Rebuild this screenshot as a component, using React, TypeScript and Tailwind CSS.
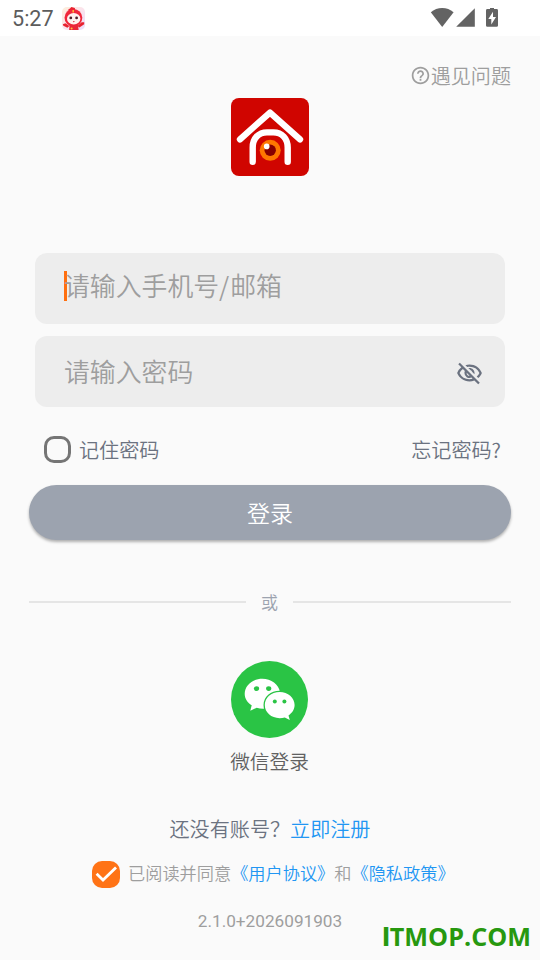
import type { ReactNode } from "react"
import { MdHelpOutline, MdOutlineVisibilityOff } from "react-icons/md"

function MascotIcon() {
  return (
    <svg viewBox="0 0 23 23" className="h-[23px] w-[23px]" aria-hidden>
      <defs>
        <linearGradient id="mascot-bg" x1="0" y1="0" x2="1" y2="1">
          <stop offset="0%" stopColor="#fdeeda" />
          <stop offset="50%" stopColor="#fbe3ec" />
          <stop offset="100%" stopColor="#eadcfb" />
        </linearGradient>
      </defs>
      <rect width="23" height="23" rx="5" fill="url(#mascot-bg)" />
      <path d="M5.5 3.2 8.2 1.2 9.4 0 12.8 1 13.4 3.4 9 4.4Z" fill="#e8222f" />
      <circle cx="11.4" cy="10.8" r="8.9" fill="#f0263a" />
      <path d="M0.8 17.2 3.4 16.2 7.4 19 5.4 20.8 1.4 18.8Z" fill="#e8222f" />
      <path d="M22.2 15.2 19.6 15.2 15.4 19 17.4 20.4 22.2 17.2Z" fill="#e8222f" />
      <path d="M7.6 17.5h8.4l0.6 5.5H7.2Z" fill="#ea2638" />
      <ellipse cx="11.7" cy="11.8" rx="6.7" ry="5.7" fill="#fff3f0" />
      <circle cx="8.8" cy="10.9" r="1.4" fill="#4b2028" />
      <circle cx="14.6" cy="10.9" r="1.4" fill="#4b2028" />
      <path d="M10.8 14h2l-1 1.4Z" fill="#e23a4a" />
      <path d="M10.4 3h1.6v2.6h-1.6Z" fill="#ffb238" />
      <circle cx="9.6" cy="21.4" r="1" fill="#ffc23c" />
    </svg>
  )
}

function StatusBar() {
  return (
    <div className="flex h-9 items-center justify-between bg-white pr-[42px] pl-3">
      <div className="flex items-center gap-2">
        <span className="w-[42px] pt-0.5 font-[Roboto] text-[21.6px] leading-8 font-normal text-[#5c5c5c]">5:27</span>
        <MascotIcon />
      </div>
      <svg viewBox="0 0 68 20" className="h-5 w-[68px]" fill="#636363" aria-hidden>
        <path d="M0.8 4.3C4 1.4 8 0 12.2 0S20.4 1.4 23.6 4.3L12.2 19Z" />
        <path d="M44.8 0.2V18.8H26.2Z" />
        <path
          fillRule="evenodd"
          d="M60 -0.6h4v1.6h2.6q1.4 0 1.4 1.4v15q0 1.4-1.4 1.4h-9.2q-1.4 0-1.4-1.4v-15q0-1.4 1.4-1.4H60ZM63 3.8 58.3 11H61.3V16.6L66 9H63Z"
        />
      </svg>
    </div>
  )
}

function HouseLogo() {
  return (
    <svg viewBox="0 0 78 78" className="h-[78px] w-[78px]" aria-label="logo">
      <rect width="78" height="78" rx="8" fill="#d00500" />
      <g fill="none" stroke="#fff" strokeWidth="6.4" strokeLinecap="round" strokeLinejoin="round">
        <path d="M9 41.3 39 14.6 69 41.3" />
        <path d="M21.7 63.8V49.5C21.7 40.5 27.5 34.4 36 34.4H42.4C51 34.4 56.7 40.5 56.7 49.5V63.8" />
      </g>
      <circle cx="39.2" cy="52.3" r="10.5" fill="#ff7800" />
      <circle cx="39.2" cy="52.3" r="5.7" fill="#870000" />
      <circle cx="35.7" cy="48.4" r="2.8" fill="#fff" />
    </svg>
  )
}

function WechatIcon() {
  return (
    <svg viewBox="0 0 77 77" className="h-[77px] w-[77px]" aria-label="wechat">
      <circle cx="38.5" cy="38.5" r="38.5" fill="#2ac445" />
      <path
        d="M31.3 17.7C21.6 17.7 13.7 24.4 13.7 32.7C13.7 37.5 16.3 41.4 20.7 44.2L19.3 49.8L25.7 46.7C29 47.7 32.5 47.9 36 47.3L49 31C47.7 23.3 40.3 17.7 31.3 17.7Z"
        fill="#fff"
      />
      <path
        d="M48.6 31C40.2 31 33.8 36.8 33.8 44.1S40.2 57.2 48.6 57.2C50.5 57.2 52.2 56.9 53.8 56.5L58.8 59L57.5 54.5C61.2 52 63.6 48.4 63.6 44.1C63.6 36.8 57 31 48.6 31Z"
        fill="#fff"
        stroke="#2ac445"
        strokeWidth="2.6"
        paintOrder="stroke"
      />
      <g fill="#2ac445">
        <ellipse cx="25.5" cy="27.6" rx="2.6" ry="2.4" />
        <ellipse cx="37.7" cy="27.6" rx="2.6" ry="2.4" />
        <circle cx="43.8" cy="40.4" r="2" />
        <circle cx="53.4" cy="40.4" r="2" />
      </g>
    </svg>
  )
}

function Field({ children }: { children: ReactNode }) {
  return (
    <div className="flex h-[71px] items-center justify-between rounded-xl bg-[#ededed] pr-[22px] pl-[29px] text-[25.85px] leading-[38px] text-[#9e9e9e]">
      {children}
    </div>
  )
}

export default function App() {
  return (
    <div className="flex h-[960px] w-[540px] flex-col overflow-hidden bg-[#fafafa] font-['Noto_Sans_CJK_SC',sans-serif] font-[350] whitespace-nowrap">
      <StatusBar />

      <div className="mt-6 flex h-8 items-center justify-end pr-[29px] text-[20.1px] text-[#9e9e9e]">
        <MdHelpOutline className="mb-0.5 h-[21px] w-[21px]" />
        <span className="pt-px">遇见问题</span>
      </div>
      <div className="mt-1.5 flex justify-center">
        <HouseLogo />
      </div>

      {/* Credentials */}
      <div className="mt-[77px] flex flex-col gap-3 px-[35px]">
        <Field>
          <div className="flex items-center pb-1.5">
            <span className="-mr-[3px] h-[30px] w-[3px] bg-[#ff6f0f]" />
            <span className="pb-0.5">
              请输入手机号<span className="pr-px">/</span>邮箱
            </span>
          </div>
        </Field>
        <Field>
          <span className="pb-0.5">请输入密码</span>
          <MdOutlineVisibilityOff className="mt-[3px] h-[27px] w-[27px] text-[#6b7280]" />
        </Field>
      </div>

      <div className="mt-[27px] flex h-8 items-center justify-between pr-[39px] pl-11 text-[20.1px] text-[#6b7280]">
        <div className="flex items-center gap-2">
          <span className="h-[27px] w-[27px] rounded-[10px] border-3 border-[#757575]" />
          <span>记住密码</span>
        </div>
        <span>忘记密码?</span>
      </div>

      <button className="mx-[29px] mt-[19px] h-[55px] shrink-0 rounded-full bg-[#9ca3af] text-[23px] leading-[55px] text-white shadow-[0_2px_3px_rgba(0,0,0,0.3)]">
        登录
      </button>

      <div className="mt-[50px] flex h-6 items-center gap-[15px] px-[29px] text-[17px] text-[#9ca3af]">
        <span className="h-0.5 w-[217px] bg-[#e5e5e5]" />
        <span>或</span>
        <span className="h-0.5 flex-1 bg-[#e5e5e5]" />
      </div>

      <div className="mt-[47px] flex flex-col items-center pr-px text-[19.7px] leading-8 text-[#616161]">
        <WechatIcon />
        <span className="mt-[7px]">微信登录</span>
      </div>

      <div className="mt-[36px] flex h-8 items-center justify-center text-[20.1px] text-[#6b7280]">
        <span>还没有账号？</span>
        <span className="text-[#2196f3]">立即注册</span>
      </div>

      <div className="mt-[15px] flex h-7 items-center pl-[92px] text-[17.2px] text-[#9e9e9e]">
        <span className="mr-2 flex h-[27px] w-[28px] items-center justify-center rounded-[10px] bg-[#ff7316]">
          <svg viewBox="0 0 28 28" className="h-7 w-7" fill="none" stroke="#fff" strokeWidth="2.8" aria-hidden>
            <path d="M4.6 13.8 11 20 24 7.4" />
          </svg>
        </span>
        <span className="pb-[3px]">
          已阅读并同意<span className="text-[#2196f3]">《用户协议》</span>和<span className="text-[#2196f3]">《隐私政策》</span>
        </span>
      </div>

      <div className="mt-[21px] text-center font-[Roboto] text-[17.2px] leading-6 font-normal text-[#9e9e9e]">
        2.1.0+2026091903
      </div>

      <div className="-mt-[13px] pr-[9px] text-right font-['Open_Sans'] text-[25.2px] leading-8 font-bold text-[#27980f]">
        <span className="font-[Roboto] font-black">I</span>TMOP.COM
      </div>
    </div>
  )
}
